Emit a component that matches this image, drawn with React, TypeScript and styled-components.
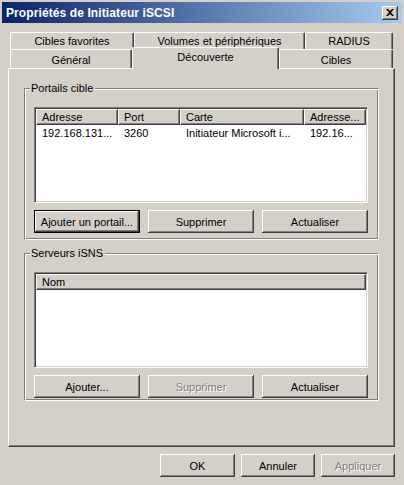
import React from 'react';
import styled, { createGlobalStyle } from 'styled-components';

const GlobalStyle = createGlobalStyle`
  html, body {
    margin: 0;
    padding: 0;
    background: #d4d0c8;
  }
  body {
    font-family: "Liberation Sans", Arial, sans-serif;
    font-size: 11px;
    color: #000;
  }
`;

const Window = styled.div`
  width: 404px;
  height: 485px;
  box-sizing: border-box;
  padding: 2px 2px 0 2px;
  background: #d4d0c8;
  display: flex;
  flex-direction: column;
  overflow: hidden;
`;

const TitleBar = styled.div`
  height: 21px;
  padding: 0 4px;
  background: linear-gradient(to right, #0a246a, #a6caf0);
  display: flex;
  align-items: center;
  justify-content: space-between;
`;

const TitleText = styled.span`
  color: #fff;
  font-weight: bold;
  font-size: 12px;
  letter-spacing: 0.1px;
`;

const CloseButton = styled.div`
  width: 16px;
  height: 14px;
  box-sizing: border-box;
  background: #d4d0c8;
  box-shadow: inset -1px -1px #404040, inset 1px 1px #fff, inset -2px -2px #808080;
  display: flex;
  align-items: center;
  justify-content: center;
`;

const Body = styled.div`
  margin: 9px 0 0 6px;
  width: 387px;
  display: flex;
  flex-direction: column;
`;

const TabRow = styled.div<{ $front?: boolean }>`
  display: flex;
  margin-left: 2px;
  width: 383px;
  height: ${(p) => (p.$front ? '21px' : '17px')};
  margin-top: ${(p) => (p.$front ? '-2px' : '0')};
  align-items: flex-end;
  position: relative;
  z-index: ${(p) => (p.$front ? 2 : 0)};
`;

const Tab = styled.div<{ $w: number; $active?: boolean; $low?: boolean }>`
  box-sizing: border-box;
  width: ${(p) => p.$w}px;
  height: ${(p) => (p.$active ? '22px' : p.$low ? '19px' : '17px')};
  margin-bottom: ${(p) => (p.$active ? '-1px' : '0')};
  background: #d4d0c8;
  border-top: 1px solid #fff;
  border-left: 1px solid #fff;
  border-right: 1px solid #404040;
  border-radius: 2px 2px 0 0;
  box-shadow: inset -1px 0 #808080;
  display: flex;
  align-items: ${(p) => (p.$active ? 'flex-start' : 'center')};
  padding-top: ${(p) => (p.$active ? '3px' : p.$low ? '2px' : '0')};
  justify-content: center;
  position: relative;
  z-index: ${(p) => (p.$active ? 3 : 1)};
`;

const Panel = styled.div`
  box-sizing: border-box;
  width: 387px;
  height: 379px;
  border-top: 1px solid #fff;
  border-left: 1px solid #fff;
  border-right: 1px solid #404040;
  border-bottom: 1px solid #404040;
  box-shadow: inset -1px -1px #808080;
  padding: 19px 15px 0 15px;
  display: flex;
  flex-direction: column;
  position: relative;
  z-index: 1;
`;

const Group = styled.div<{ $h: number; $gap?: number }>`
  box-sizing: border-box;
  height: ${(p) => p.$h}px;
  margin-top: ${(p) => p.$gap || 0}px;
  border: 1px solid;
  border-color: #808080 #fff #fff #808080;
  box-shadow: inset 1px 1px #fff, inset -1px -1px #808080;
  padding: 0 10px 0 9px;
  display: flex;
  flex-direction: column;
`;

const Legend = styled.div`
  align-self: flex-start;
  margin: -8px 0 0 -4px;
  padding: 0 2px 0 1px;
  height: 14px;
  line-height: 14px;
  background: #d4d0c8;
`;

const ListView = styled.div`
  box-sizing: border-box;
  margin-top: 12px;
  height: 96px;
  background: #fff;
  border: 1px solid;
  border-color: #808080 #fff #fff #808080;
  box-shadow: inset 1px 1px #404040, inset -1px -1px #d4d0c8;
  padding: 1px;
  display: flex;
  flex-direction: column;
`;

const ListRow = styled.div<{ $cols: string }>`
  display: grid;
  grid-template-columns: ${(p) => p.$cols};
  height: 16px;
`;

const HeaderCell = styled.div`
  box-sizing: border-box;
  height: 16px;
  padding: 0 5px;
  background: #d4d0c8;
  border-top: 1px solid #fff;
  border-left: 1px solid #fff;
  border-right: 1px solid #404040;
  border-bottom: 1px solid #404040;
  box-shadow: inset -1px -1px #808080;
  line-height: 14px;
  white-space: nowrap;
  overflow: hidden;
`;

const Cell = styled.div`
  padding: 0 6px;
  line-height: 16px;
  white-space: nowrap;
  overflow: hidden;
`;

const ButtonRow = styled.div`
  display: grid;
  grid-template-columns: repeat(3, 1fr);
  column-gap: 8px;
  margin-top: 7px;
`;

const Button = styled.div<{ $default?: boolean; $disabled?: boolean; $w?: number }>`
  box-sizing: border-box;
  height: 23px;
  width: ${(p) => (p.$w ? `${p.$w}px` : 'auto')};
  background: #d4d0c8;
  border: ${(p) => (p.$default ? '1px solid #000' : 'none')};
  box-shadow: inset -1px -1px #404040, inset 1px 1px #fff, inset -2px -2px #808080;
  display: flex;
  align-items: center;
  justify-content: center;
  color: ${(p) => (p.$disabled ? '#808080' : '#000')};
  text-shadow: ${(p) => (p.$disabled ? '1px 1px #fff' : 'none')};
  white-space: nowrap;
`;

const Footer = styled.div`
  display: flex;
  justify-content: flex-end;
  gap: 6px;
  margin-top: 7px;
`;

const portalCols = '82px 62px 124px 62px';

export default function App() {
  return (
    <>
      <GlobalStyle />
      <Window>
        <TitleBar>
          <TitleText>Propriétés de Initiateur iSCSI</TitleText>
          <CloseButton>
            <svg width="8" height="7" viewBox="0 0 8 7">
              <path d="M0 0h2l2 2 2-2h2L5 3.5 8 7H6L4 5 2 7H0l3-3.5z" fill="#000" />
            </svg>
          </CloseButton>
        </TitleBar>
        <Body>
          <TabRow>
            <Tab $w={124}>Cibles favorites</Tab>
            <Tab $w={171}>Volumes et périphériques</Tab>
            <Tab $w={88}>RADIUS</Tab>
          </TabRow>
          <TabRow $front>
            <Tab $w={122} $low>Général</Tab>
            <Tab $w={147} $active>Découverte</Tab>
            <Tab $w={114} $low>Cibles</Tab>
          </TabRow>
          <Panel>
            <Group $h={152}>
              <Legend>Portails cible</Legend>
              <ListView>
                <ListRow $cols={portalCols}>
                  <HeaderCell>Adresse</HeaderCell>
                  <HeaderCell>Port</HeaderCell>
                  <HeaderCell>Carte</HeaderCell>
                  <HeaderCell>Adresse...</HeaderCell>
                </ListRow>
                <ListRow $cols={portalCols}>
                  <Cell>192.168.131...</Cell>
                  <Cell>3260</Cell>
                  <Cell>Initiateur Microsoft i...</Cell>
                  <Cell>192.16...</Cell>
                </ListRow>
              </ListView>
              <ButtonRow>
                <Button $default>Ajouter un portail...</Button>
                <Button>Supprimer</Button>
                <Button>Actualiser</Button>
              </ButtonRow>
            </Group>
            <Group $h={148} $gap={13}>
              <Legend>Serveurs iSNS</Legend>
              <ListView>
                <ListRow $cols="1fr">
                  <HeaderCell>Nom</HeaderCell>
                </ListRow>
              </ListView>
              <ButtonRow>
                <Button>Ajouter...</Button>
                <Button $disabled>Supprimer</Button>
                <Button>Actualiser</Button>
              </ButtonRow>
            </Group>
          </Panel>
          <Footer>
            <Button $w={75}>OK</Button>
            <Button $w={74}>Annuler</Button>
            <Button $w={74} $disabled>Appliquer</Button>
          </Footer>
        </Body>
      </Window>
    </>
  );
}
